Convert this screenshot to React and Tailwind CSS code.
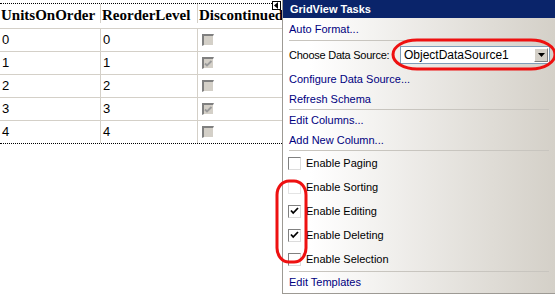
import React from 'react';

const rows = [
  { a: '0', b: '0', c: false },
  { a: '1', b: '1', c: true },
  { a: '2', b: '2', c: false },
  { a: '3', b: '3', c: true },
  { a: '4', b: '4', c: false },
];

function GridCheck({ checked }) {
  return (
    <div className="w-[12px] h-[12px] bg-[#d4d0c8] border-t-2 border-l-2 border-t-[#808080] border-l-[#808080] border-b border-r border-b-white border-r-white flex items-center justify-center">
      {checked && (
        <svg width="9" height="8" viewBox="0 0 9 8">
          <path d="M1 3.5 L3 5.5 L7.5 1" stroke="#9a9a9a" strokeWidth="1.8" fill="none" />
        </svg>
      )}
    </div>
  );
}

function TaskCheck({ checked, faint }) {
  return (
    <div
      className={`w-[13px] h-[13px] bg-white border flex items-center justify-center ${
        faint ? 'border-[#e4e4e4]' : 'border-t-[#808080] border-l-[#808080] border-b-[#dcdcdc] border-r-[#dcdcdc]'
      }`}
    >
      {checked && (
        <svg width="9" height="8" viewBox="0 0 9 8">
          <path d="M1 3.5 L3.2 6 L8 1" stroke="#000" strokeWidth="1.8" fill="none" />
        </svg>
      )}
    </div>
  );
}

function Sep() {
  return <div className="mx-[6px] h-px bg-[#c8c5bf]" />;
}

export default function App() {
  const options = [
    ['Enable Paging', false, false],
    ['Enable Sorting', false, true],
    ['Enable Editing', true, false],
    ['Enable Deleting', true, false],
    ['Enable Selection', false, false],
  ];

  return (
    <div className="relative w-[555px] h-[294px] bg-white overflow-hidden flex">
      {/* grid preview */}
      <div className="w-[282px] shrink-0 overflow-hidden pt-[3px]">
        <div className="w-[272px] border-t border-dotted border-black" />
        <div className="w-[330px] font-['Liberation_Serif',serif]">
          <div className="flex h-[25px] items-end border-b border-[#d4d0c8] text-[15px] font-bold text-black leading-none pb-[5px]">
            <div className="w-[101px] pl-[1px] border-r border-[#d4d0c8] h-full flex items-end">UnitsOnOrder</div>
            <div className="w-[97px] pl-[1px] border-r border-[#d4d0c8] h-full flex items-end">ReorderLevel</div>
            <div className="pl-[1px] h-full flex items-end">Discontinued</div>
          </div>
          {rows.map((r, i) => (
            <div
              key={i}
              className={`flex h-[23px] font-['Liberation_Sans',sans-serif] text-[13px] text-black ${
                i === rows.length - 1 ? 'border-b border-dotted border-black w-[282px]' : 'border-b border-[#d4d0c8]'
              }`}
            >
              <div className="w-[101px] pl-[2px] border-r border-[#d4d0c8] flex items-center">{r.a}</div>
              <div className="w-[97px] pl-[2px] border-r border-[#d4d0c8] flex items-center">{r.b}</div>
              <div className="pl-[4px] flex items-center">
                <GridCheck checked={r.c} />
              </div>
            </div>
          ))}
        </div>
      </div>

      {/* smart tag arrow */}
      <div className="absolute left-[272px] top-[1px] w-[9px] h-[9px] bg-white border border-black flex items-center justify-center">
        <svg width="5" height="7" viewBox="0 0 5 7">
          <path d="M4 0 L0 3.5 L4 7 Z" fill="#000" />
        </svg>
      </div>

      {/* tasks panel */}
      <div className="w-[273px] h-[294px] border-l border-b border-[#9d9a94] bg-gradient-to-r from-white from-10% to-[#d4d0c8] font-['Liberation_Sans',sans-serif] text-[11px]">
        <div className="h-[18px] bg-[#0a246a] text-white font-bold flex items-center pl-[7px]">GridView Tasks</div>
        <div className="h-[22px] flex items-center pl-[6px] text-[#00007f]">Auto Format...</div>
        <Sep />
        <div className="h-[28px] flex items-center pl-[6px] text-black">
          <span className="w-[111px] tracking-[-0.25px]">Choose Data Source:</span>
          <div className="w-[150px] h-[18px] bg-white border border-[#7f9db9] flex items-center justify-between pl-[3px]">
            <span className="text-[12px]">ObjectDataSource1</span>
            <div className="w-[14px] h-[14px] mr-[1px] bg-[#d4d0c8] border border-t-white border-l-white border-b-[#808080] border-r-[#808080] flex items-center justify-center">
              <svg width="7" height="4" viewBox="0 0 7 4">
                <path d="M0 0 L7 0 L3.5 4 Z" fill="#000" />
              </svg>
            </div>
          </div>
        </div>
        <div className="h-[20px] flex items-center pl-[6px] text-[#00007f]">Configure Data Source...</div>
        <div className="h-[20px] flex items-center pl-[6px] text-[#00007f]">Refresh Schema</div>
        <Sep />
        <div className="h-[20px] flex items-center pl-[6px] text-[#00007f]">Edit Columns...</div>
        <div className="h-[20px] flex items-center pl-[6px] text-[#00007f]">Add New Column...</div>
        <Sep />
        {options.map(([label, checked, faint]) => (
          <div key={label} className="h-[24px] flex items-center pl-[5px] gap-[5px] text-black">
            <TaskCheck checked={checked} faint={faint} />
            <span>{label}</span>
          </div>
        ))}
        <Sep />
        <div className="h-[21px] flex items-center pl-[6px] text-[#00007f]">Edit Templates</div>
      </div>

      {/* red annotation marks */}
      <svg className="absolute left-0 top-0 pointer-events-none" width="555" height="294">
        <rect x="393" y="40" width="162" height="29" rx="24" ry="14.5" fill="none" stroke="#ee1111" strokeWidth="3" />
        <rect x="277" y="181" width="29" height="81" rx="12" ry="14" fill="none" stroke="#ee1111" strokeWidth="3" />
      </svg>
    </div>
  );
}
